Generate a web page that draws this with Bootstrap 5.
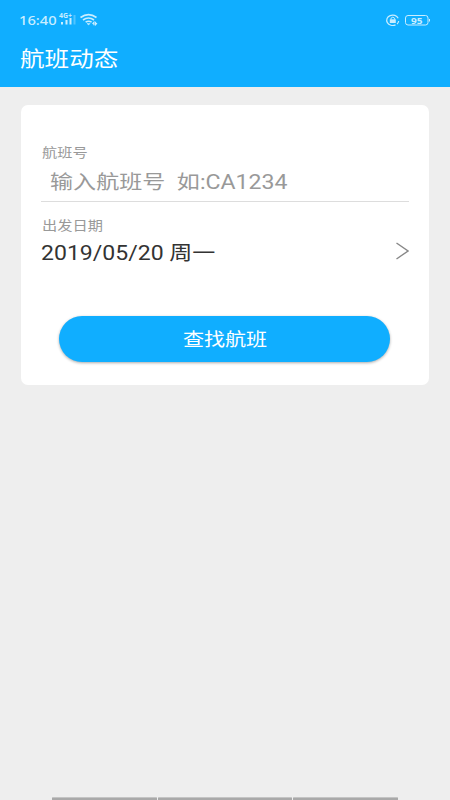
<!DOCTYPE html>
<html lang="zh-CN">
<head>
<meta charset="utf-8">
<meta name="viewport" content="width=device-width, initial-scale=1">
<title>航班动态</title>
<link href="https://cdn.jsdelivr.net/npm/bootstrap@5.3.0/dist/css/bootstrap.min.css" rel="stylesheet">
<style>
body{background:#eee;font-family:Roboto,"Noto Sans CJK SC",sans-serif;height:800px;overflow:hidden}
.wide{display:inline-block;white-space:pre;transform:scaleX(1.17);transform-origin:0 50%}
.top-area{background:#10aeff;height:87px;color:#fff}
.status-row{height:39px;padding:0 19px 0 19px;color:#c9edff}
.clock{font:500 13px/20px "Noto Sans",sans-serif;transform:scaleX(1.13);width:35px}
.page-title{font-size:21px;line-height:30px;padding-left:20px;margin-top:5px}
.flight-card{margin:18px 21px 0;height:280px;border:0;border-radius:7px;padding:38px 20px 0 20px}
.field-label{font-size:13px;line-height:20px;color:#999;padding-left:.5px}
.flight-input{font-size:19.6px;line-height:28px;color:#999;padding:6px 0 5px 8.5px;height:39px;border-bottom:1px solid #ddd}
.flight-input .wide{transform:scaleX(1.178)}
.date-label{margin-top:14px}
.date-row{height:33px;font-size:19.7px;line-height:30px;color:#333}
.date-row .wide{padding-top:2px}
.date-row svg{margin-bottom:4px}
.search-btn{width:331px;height:46px;margin:47px 1px 0 0;border:0;background:#10aeff;color:#fff;font-size:18px;box-shadow:0 1px 3px #0005}
.search-btn .wide{transform-origin:50% 50%}
.home-bar{height:3px;padding:0 52px;gap:1px}
.home-bar span{background:#a9a9a9;border-top:1px solid #c4c4c4;border-radius:1px 1px 0 0}
</style>
</head>
<body class="d-flex flex-column">
<header class="top-area">
  <div class="status-row d-flex align-items-center">
    <span class="wide clock">16:40</span>
    <svg class="ms-1" width="42" height="18" viewBox="58 11 42 18" fill="none" stroke="#c9edff">
      <text x="59" y="18" font-family="Noto Sans" font-weight="700" font-size="6.500" textLength="13" lengthAdjust="spacingAndGlyphs" fill="#c9edff" stroke="none">4G+</text>
      <path d="M62 22v2.500M66.500 20v4.500M70.500 18v6.500" stroke-width="2"/><path d="M74.500 15v9.500" stroke-width="2" opacity=".35"/>
      <path d="M80.500 17.500q8-5.800 16 0M83 20q5.500-4 11 0M85.600 22.200q3-2 6 0" stroke-width="1.600"/>
      <path d="M87 23.500l1.600 1.500 1.500-1.500z" fill="#c9edff" stroke-width=".5"/>
      <path d="M92.500 23.800l1.400-1.500v3M95.500 21.700v3l1.500-1.500" stroke-width="1.200"/>
    </svg>
    <svg class="ms-auto" width="46" height="14" viewBox="385 12 46 14" fill="none" stroke="#c9edff">
      <path d="M398.200 17.200A6 5.200 0 1 0 395.500 23.900M397 23a6 5.200 0 0 0 1.700-3" stroke-width="1.200"/>
      <path d="M389.800 18.300h6v3.700h-6z" fill="#c9edff" stroke="none"/><path d="M391 18.500v-1.300q1.800-2 3.600 0v1.300"/>
      <rect x="405.500" y="14.500" width="22.500" height="9.500" rx="2.500"/><path d="M429.500 18v2.500"/>
      <text x="411" y="22.500" font-family="Noto Sans" font-weight="700" font-size="8.500" textLength="11.500" lengthAdjust="spacingAndGlyphs" fill="#c9edff" stroke="none">95</text>
    </svg>
  </div>
  <h1 class="page-title fw-normal mb-0"><span class="wide">航班动态</span></h1>
</header>
<main class="flex-grow-1">
  <section class="card flight-card">
    <div class="field-label"><span class="wide">航班号</span></div>
    <div class="flight-input"><span class="wide">输入航班号  如:CA1234</span></div>
    <div class="field-label date-label"><span class="wide">出发日期</span></div>
    <div class="date-row d-flex justify-content-between align-items-center">
      <span class="wide">2019/05/20 周一</span>
      <svg width="14" height="18" viewBox="0 0 14 18" fill="none" stroke="#888" stroke-width="1.400"><path d="M1.500 1l11.500 8-11.500 8"/></svg>
    </div>
    <button type="button" class="btn search-btn rounded-pill align-self-center p-0"><span class="wide">查找航班</span></button>
  </section>
</main>
<footer class="home-bar d-flex">
  <span style="width:105px"></span><span style="width:134px"></span><span style="width:105px"></span>
</footer>
</body>
</html>
